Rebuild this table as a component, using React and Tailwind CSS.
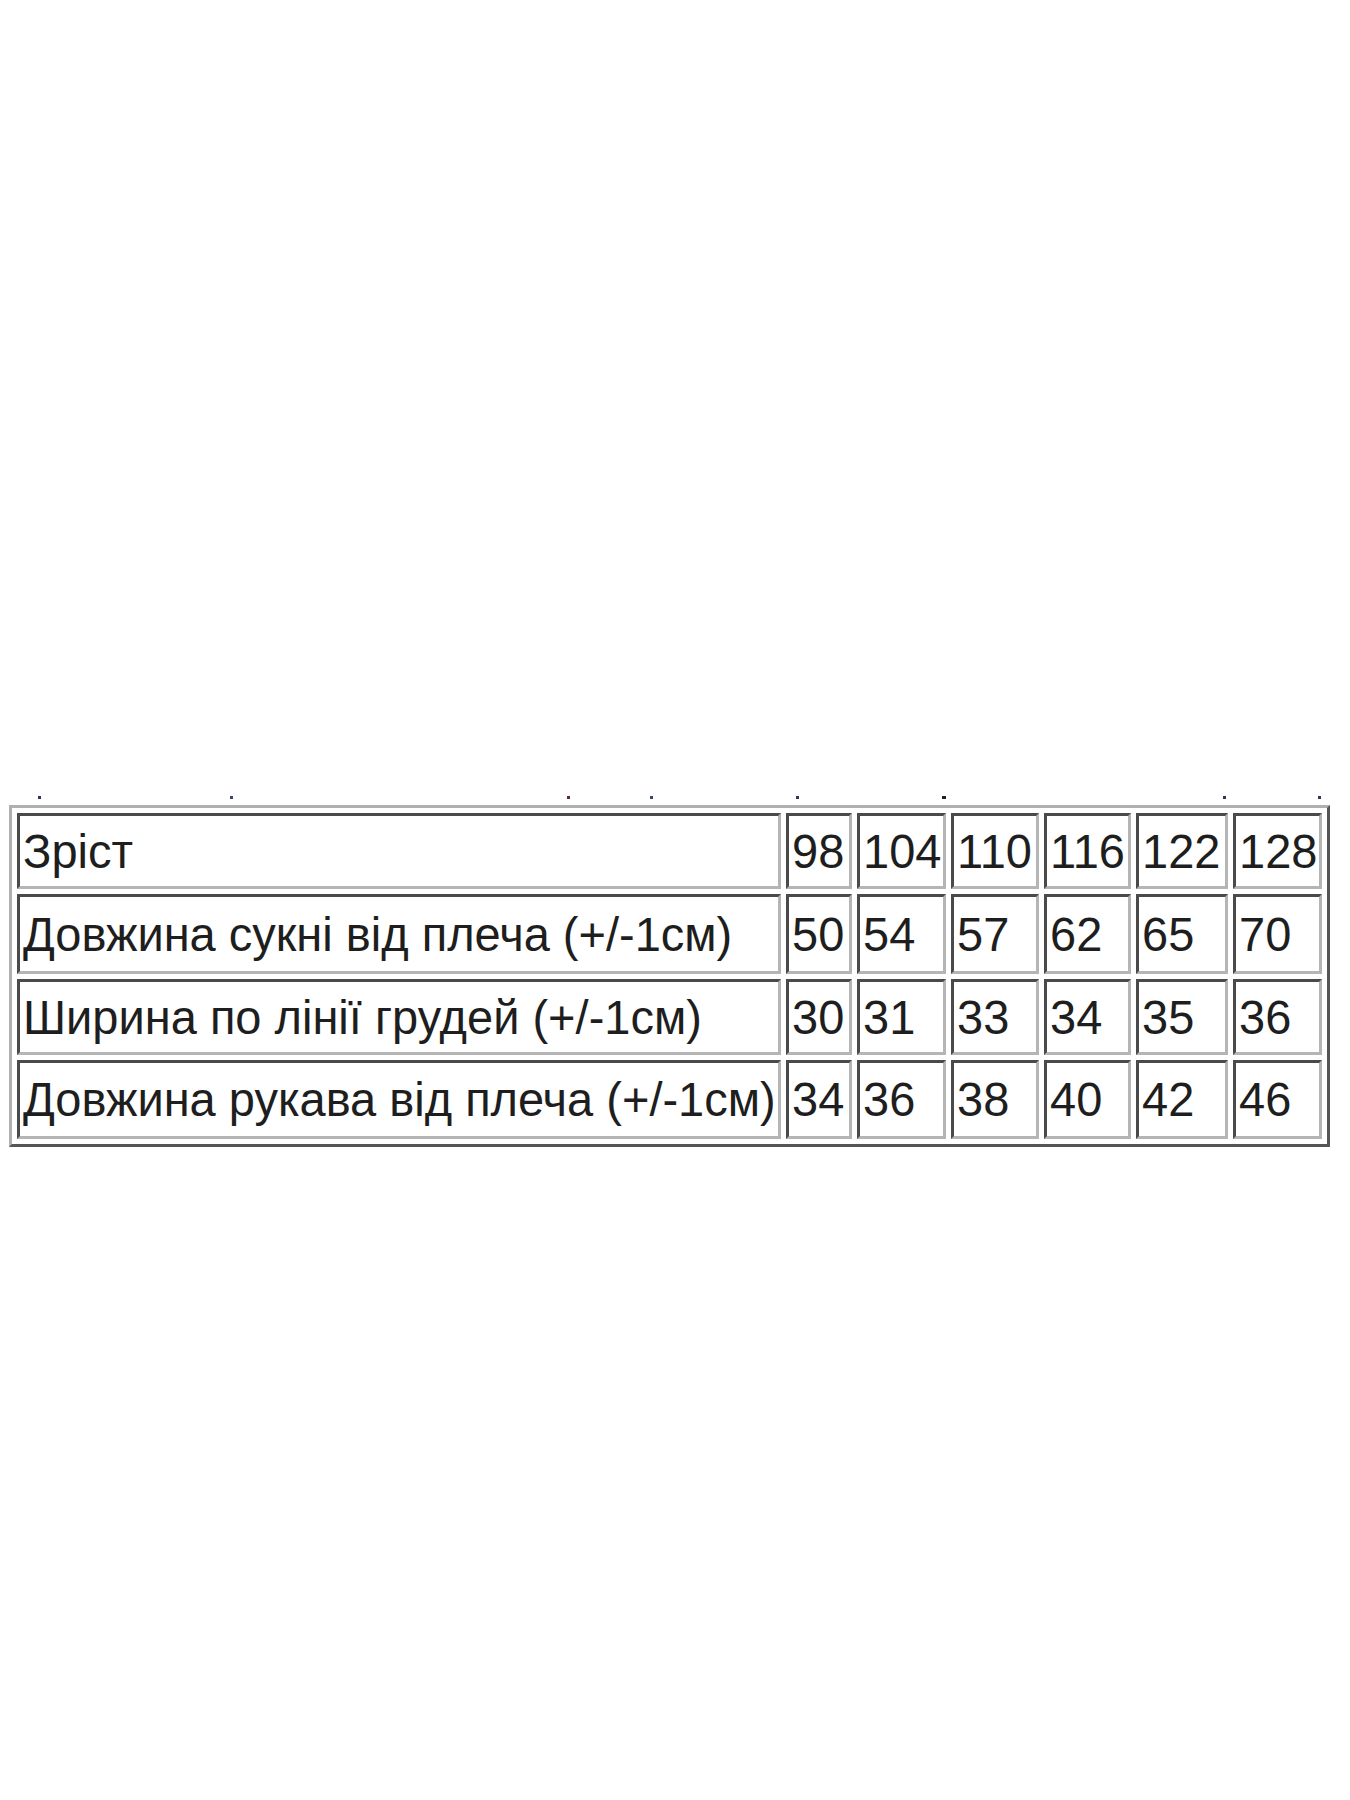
import React from 'react';

// Таблиця розмірів (сукня)
const sizes = ['98', '104', '110', '116', '122', '128'];

const rows = [
  { label: 'Зріст', values: sizes, h: 'h-[76px]' },
  { label: 'Довжина сукні від плеча (+/-1см)', values: ['50', '54', '57', '62', '65', '70'], h: 'h-[80px]' },
  { label: 'Ширина по лінії грудей (+/-1см)', values: ['30', '31', '33', '34', '35', '36'], h: 'h-[76px]' },
  { label: 'Довжина рукава від плеча (+/-1см)', values: ['34', '36', '38', '40', '42', '46'], h: 'h-[79px]' },
];

const cell =
  'border-[3px] border-t-[#4a4a4a] border-l-[#4a4a4a] border-b-[#b5b5b5] border-r-[#b5b5b5] px-[3px] text-left align-middle whitespace-nowrap overflow-visible';

const Txt = ({ children }) => (
  <span className="inline-block origin-center scale-y-[1.03]">{children}</span>
);

const App = () => {
  return (
    <div className="min-h-[1800px] w-[1350px] bg-white pt-[796px] text-[#1e1e1e]" style={{ fontFamily: '"Liberation Sans", Arial, sans-serif' }}>
      {/* залишки обрізаного тексту над таблицею */}
      <div className="flex h-[3px]">
        <span className="ml-[38px] h-[3px] w-[3px] bg-[#3a3050]" />
        <span className="ml-[189px] h-[3px] w-[3px] bg-[#3a4a60]" />
        <span className="ml-[334px] h-[3px] w-[3px] bg-[#503040]" />
        <span className="ml-[80px] h-[3px] w-[3px] bg-[#3a4a60]" />
        <span className="ml-[143px] h-[3px] w-[3px] bg-[#403050]" />
        <span className="ml-[143px] h-[3px] w-[4px] bg-[#202030]" />
        <span className="ml-[277px] h-[3px] w-[3px] bg-[#403050]" />
        <span className="ml-[92px] h-[3px] w-[3px] bg-[#403050]" />
      </div>

      <table className="ml-[9px] mt-[6px] w-[1321px] table-fixed border-separate border-spacing-x-[5px] border-spacing-y-[5px] border-[3px] border-t-[#b0b0b0] border-l-[#b0b0b0] border-b-[#555] border-r-[#555] text-[47px] leading-none">
        <colgroup>
          <col className="w-[764px]" />
          <col className="w-[66px]" />
          <col className="w-[89px]" />
          <col className="w-[88px]" />
          <col className="w-[87px]" />
          <col className="w-[92px]" />
          <col className="w-[89px]" />
        </colgroup>
        <tbody>
          {rows.map(row => (
            <tr key={row.label}>
              <td className={`${cell} ${row.h}`}>
                <Txt>{row.label}</Txt>
              </td>
              {row.values.map((v, i) => (
                <td key={i} className={`${cell} ${row.h}`}>
                  <Txt>{v}</Txt>
                </td>
              ))}
            </tr>
          ))}
        </tbody>
      </table>
    </div>
  );
};

export default App;
